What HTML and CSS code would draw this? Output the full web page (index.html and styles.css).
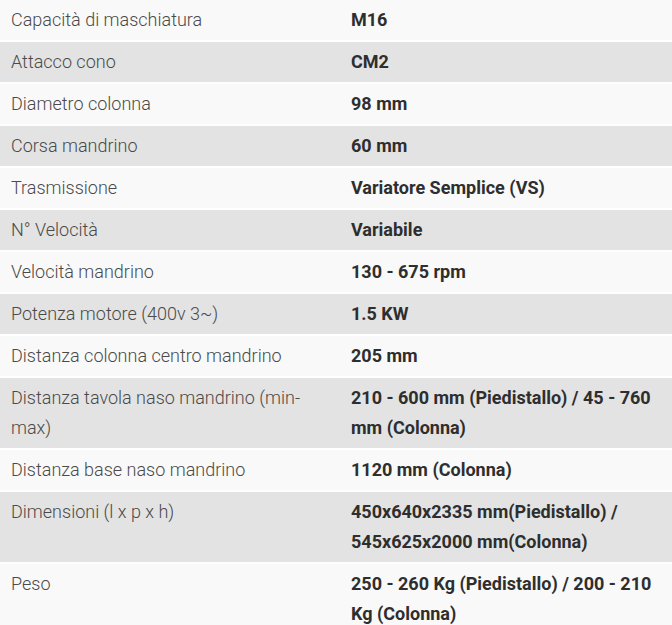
FILE: index.html
```html
<!DOCTYPE html>
<html lang="it">
<head>
<meta charset="utf-8">
<link rel="stylesheet" href="styles.css">
</head>
<body>
<table class="specs">
  <tbody>
    <tr><td class="label">Capacità di maschiatura</td><td class="value">M16</td></tr>
    <tr><td class="label">Attacco cono</td><td class="value">CM2</td></tr>
    <tr><td class="label">Diametro colonna</td><td class="value">98 mm</td></tr>
    <tr><td class="label">Corsa mandrino</td><td class="value">60 mm</td></tr>
    <tr><td class="label">Trasmissione</td><td class="value">Variatore Semplice (VS)</td></tr>
    <tr><td class="label">N° Velocità</td><td class="value">Variabile</td></tr>
    <tr><td class="label">Velocità mandrino</td><td class="value">130 - 675 rpm</td></tr>
    <tr><td class="label">Potenza motore (400v 3~)</td><td class="value">1.5 KW</td></tr>
    <tr><td class="label">Distanza colonna centro mandrino</td><td class="value">205 mm</td></tr>
    <tr><td class="label">Distanza tavola naso mandrino (min-max)</td><td class="value">210 - 600 mm (Piedistallo) / 45 - 760 mm (Colonna)</td></tr>
    <tr><td class="label">Distanza base naso mandrino</td><td class="value">1120 mm (Colonna)</td></tr>
    <tr><td class="label">Dimensioni (l x p x h)</td><td class="value">450x640x2335 mm(Piedistallo) / 545x625x2000 mm(Colonna)</td></tr>
    <tr><td class="label">Peso</td><td class="value">250 - 260 Kg (Piedistallo) / 200 - 210 Kg (Colonna)</td></tr>
  </tbody>
</table>
</body>
</html>
```
FILE: styles.css
```css
html, body {
  margin: 0;
  padding: 0;
  background: #ffffff;
}
.specs {
  width: 672px;
  border-collapse: collapse;
  table-layout: fixed;
  font-family: Roboto, "Liberation Sans", sans-serif;
  font-size: 18px;
  line-height: 30px;
}
.specs tr {
  background: #f9f9f9;
  border-bottom: 2px solid #ffffff;
}
.specs tr:nth-child(even) {
  background: #e3e3e3;
}
.specs td {
  padding: 5px 11px;
  vertical-align: top;
  text-align: left;
}
.label {
  width: 318px;
  color: #4a4a4a;
  font-weight: 300;
}
.value {
  color: #2e2e2e;
  font-weight: 700;
}
```
